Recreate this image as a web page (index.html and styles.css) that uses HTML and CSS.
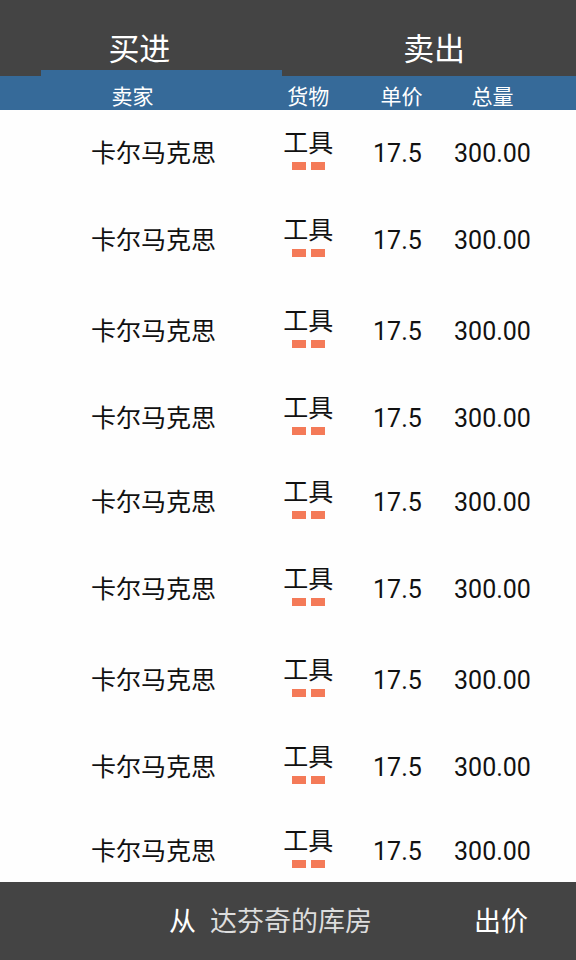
FILE: index.html
```html
<!DOCTYPE html>
<html lang="zh-CN">
<head>
<meta charset="utf-8">
<meta name="viewport" content="width=device-width, initial-scale=1">
<title>买进</title>
<link rel="stylesheet" href="styles.css">
</head>
<body>
<nav class="tabs">
  <button class="tab active" type="button">买进</button>
  <button class="tab" type="button">卖出</button>
</nav>
<main class="market">
  <table class="offers">
    <thead>
      <tr><th class="seller">卖家</th><th class="goods">货物</th><th class="price">单价</th><th class="total">总量</th><th class="edge"></th></tr>
    </thead>
    <tbody>
      <tr><td class="seller">卡尔马克思</td><td class="goods">工具<span class="level"><i></i><i></i></span></td><td>17.5</td><td>300.00</td><td></td></tr>
      <tr><td class="seller">卡尔马克思</td><td class="goods">工具<span class="level"><i></i><i></i></span></td><td>17.5</td><td>300.00</td><td></td></tr>
      <tr><td class="seller">卡尔马克思</td><td class="goods">工具<span class="level"><i></i><i></i></span></td><td>17.5</td><td>300.00</td><td></td></tr>
      <tr><td class="seller">卡尔马克思</td><td class="goods">工具<span class="level"><i></i><i></i></span></td><td>17.5</td><td>300.00</td><td></td></tr>
      <tr><td class="seller">卡尔马克思</td><td class="goods">工具<span class="level"><i></i><i></i></span></td><td>17.5</td><td>300.00</td><td></td></tr>
      <tr><td class="seller">卡尔马克思</td><td class="goods">工具<span class="level"><i></i><i></i></span></td><td>17.5</td><td>300.00</td><td></td></tr>
      <tr><td class="seller">卡尔马克思</td><td class="goods">工具<span class="level"><i></i><i></i></span></td><td>17.5</td><td>300.00</td><td></td></tr>
      <tr><td class="seller">卡尔马克思</td><td class="goods">工具<span class="level"><i></i><i></i></span></td><td>17.5</td><td>300.00</td><td></td></tr>
      <tr><td class="seller">卡尔马克思</td><td class="goods">工具<span class="level"><i></i><i></i></span></td><td>17.5</td><td>300.00</td><td></td></tr>
    </tbody>
  </table>
</main>
<footer class="bar">
  <label class="from" for="store">从</label>
  <select class="store" id="store"><option>达芬奇的库房</option></select>
  <button class="bid" type="button">出价</button>
</footer>
</body>
</html>
```
FILE: styles.css
```css
* { box-sizing: border-box; }

body {
  margin: 0;
  min-height: 100vh;
  display: flex;
  flex-direction: column;
  background: #fefefe;
  color: #111;
  font-family: Roboto, "Noto Sans CJK SC", sans-serif;
}

button, select {
  margin: 0;
  padding: 0;
  border: 0;
  background: none;
  color: #fff;
  font-family: inherit;
}

.tabs {
  display: grid;
  grid-template-columns: 45% 45%;
  padding-left: 41px;
  background: #444;
}

.tab {
  height: 76px;
  padding: 30px 44px 0 0;
  border-bottom: 6px solid transparent;
  font-size: 31px;
  line-height: 40px;
}

.tab + .tab { padding: 30px 0 0 64px; }

.tab.active { border-color: #366a99; }

.market { flex: 1; }

.offers {
  width: 100%;
  border-collapse: collapse;
  table-layout: fixed;
  text-align: center;
}

.offers th {
  height: 34px;
  padding: 8px 0 0;
  background: #366a99;
  color: #fff;
  font-size: 21px;
  font-weight: 400;
  line-height: 26px;
}

th.seller { width: 46%; }
th.goods { width: 15%; }
th.price { width: 16%; }
th.total { width: 17%; }
.offers th.price { padding-left: 8px; }

.offers td {
  height: 87px;
  padding: 28px 0 0;
  vertical-align: top;
  font-size: 25px;
  line-height: 32px;
}

.offers td.seller { padding-left: 42px; }
.offers td.goods { padding-top: 18px; }

.offers tr:nth-child(4n + 2) td { height: 91px; }
.offers tr:nth-child(4n) td { height: 84px; }
.offers tr:last-child td { height: 72px; }

.level {
  display: flex;
  justify-content: center;
  gap: 5px;
  margin-top: 2px;
}

.level i {
  width: 14px;
  height: 8px;
  background: #f47a58;
}

.bar {
  display: flex;
  align-items: center;
  height: 78px;
  padding: 2px 48px 0;
  background: #444;
  color: #fff;
  font-size: 27px;
  line-height: 40px;
}

.from { margin-left: auto; }

.store {
  appearance: none;
  margin-left: 14px;
  color: #ddd;
  font-size: 27px;
  line-height: 40px;
}

.bid {
  margin-left: 102px;
  font-size: 27px;
  line-height: 40px;
}
```
